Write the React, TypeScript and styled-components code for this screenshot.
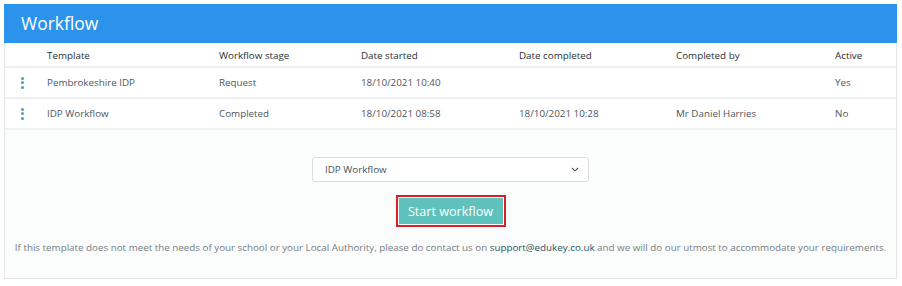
import React from "react";
import styled, { createGlobalStyle } from "styled-components";

const Global = createGlobalStyle`
  html, body { margin: 0; padding: 0; background: #ffffff; }
  body { font-family: "Open Sans", "Noto Sans", sans-serif; }
  * { box-sizing: border-box; }
`;

const Page = styled.div`
  padding: 4px 5px 0 4px;
  width: 902px;
`;

const Panel = styled.div`
  border: 1px solid #e3e6e8;
  background: #fbfcfc;
  height: 275px;
  box-shadow: 0 1px 1px rgba(0,0,0,0.04);
`;

const Header = styled.div`
  background: #2b93ec;
  color: #ffffff;
  height: 39px;
  padding: 0 0 1px 17px;
  display: flex;
  align-items: center;
  font-size: 17.5px;
  margin: -1px -1px 0 -1px;
`;

const Table = styled.div`
  display: grid;
  grid-template-columns: 42px 172px 142px 158px 157px 159px 1fr;
  background: #ffffff;
  font-size: 9.8px;
  color: #555b5f;
`;

const Row = styled.div<{ $head?: boolean }>`
  display: contents;
  & > div {
    height: ${(p) => (p.$head ? "25px" : "31px")};
    display: flex;
    align-items: center;
    padding-top: ${(p) => (p.$head ? "1px" : "0")};
    border-bottom: 2px solid #eef0f1;
    color: ${(p) => (p.$head ? "#2a2f32" : "#50565a")};
  }
`;

const Cell = styled.div``;

const DotsCell = styled.div`
  justify-content: flex-start;
  padding-left: 16px;
`;

const Dots = styled.span`
  display: flex;
  flex-direction: column;
  gap: 1.5px;
  & > i {
    width: 3px;
    height: 3px;
    border-radius: 50%;
    background: #4f9ea6;
    display: block;
  }
`;

const Body = styled.div`
  display: flex;
  flex-direction: column;
  align-items: center;
  padding-top: 27px;
`;

const Select = styled.div`
  width: 277px;
  height: 25px;
  border: 1px solid #d9dddf;
  border-radius: 3px;
  background: #ffffff;
  display: flex;
  align-items: center;
  justify-content: space-between;
  padding: 0 9px 0 12px;
  font-size: 9.8px;
  color: #4a5054;
`;

const Button = styled.div`
  margin-top: 13px;
  border: 2px solid #d8202a;
  padding: 1px;
  background: #ffffff;
`;

const ButtonInner = styled.div`
  background: #5fc1bb;
  color: #ffffff;
  font-size: 12.6px;
  width: 104px;
  height: 26px;
  display: flex;
  align-items: center;
  justify-content: center;
`;

const Note = styled.p`
  margin: 14px 0 0;
  font-size: 9.8px;
  color: #767c80;
  text-align: center;
`;

const Link = styled.a`
  color: #1f5562;
  text-decoration: none;
`;

const rows = [
  ["Pembrokeshire IDP", "Request", "18/10/2021 10:40", "", "", "Yes"],
  ["IDP Workflow", "Completed", "18/10/2021 08:58", "18/10/2021 10:28", "Mr Daniel Harries", "No"],
];

export default function App() {
  return (
    <Page>
      <Global />
      <Panel>
        <Header>Workflow</Header>
        <Table>
          <Row $head>
            <Cell />
            <Cell>Template</Cell>
            <Cell>Workflow stage</Cell>
            <Cell>Date started</Cell>
            <Cell>Date completed</Cell>
            <Cell>Completed by</Cell>
            <Cell>Active</Cell>
          </Row>
          {rows.map((r, i) => (
            <Row key={i}>
              <DotsCell>
                <Dots>
                  <i />
                  <i />
                  <i />
                </Dots>
              </DotsCell>
              {r.map((c, j) => (
                <Cell key={j}>{c}</Cell>
              ))}
            </Row>
          ))}
        </Table>
        <Body>
          <Select>
            <span>IDP Workflow</span>
            <svg width="8" height="5" viewBox="0 0 8 5">
              <path d="M1 1l3 2.8L7 1" fill="none" stroke="#555" strokeWidth="1.1" />
            </svg>
          </Select>
          <Button>
            <ButtonInner>Start workflow</ButtonInner>
          </Button>
          <Note>
            If this template does not meet the needs of your school or your Local Authority, please do contact us on{" "}
            <Link href="#">support@edukey.co.uk</Link> and we will do our utmost to accommodate your requirements.
          </Note>
        </Body>
      </Panel>
    </Page>
  );
}
